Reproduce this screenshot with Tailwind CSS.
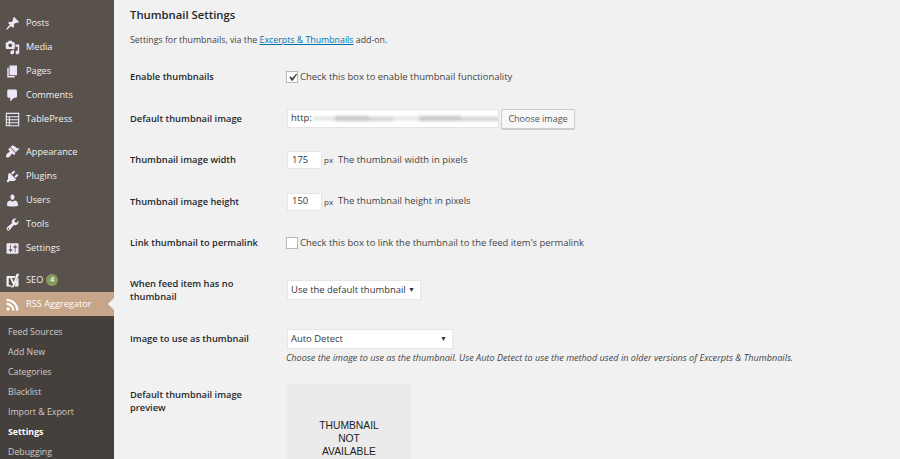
<!DOCTYPE html>
<html lang="en">
<head>
    <meta charset="UTF-8">
    <meta name="viewport" content="width=device-width, initial-scale=1.0">
    <title>Thumbnail Settings</title>
    <script src="https://cdn.jsdelivr.net/npm/@tailwindcss/browser@4"></script>
</head>
<body class="bg-[#f1f1f1] font-['Open_Sans',sans-serif] text-[9.45px] text-[#444]">
    <div class="flex h-[459px] w-[900px] overflow-hidden">
        <!-- Admin menu -->
        <aside class="w-[114px] shrink-0 bg-[#59524c] text-[#f1f1f1] text-[9.2px]">
            <ul class="pt-[11px]">
                <li class="flex h-6 items-center gap-[6px] pl-[5px]">
                    <svg class="size-[15px] fill-[#ece6f6]" viewBox="0 0 20 20"><path d="M10.44 3.02l1.82-1.82 6.36 6.35-1.83 1.82c-1.05-.68-2.48-.57-3.41.36l-.75.75c-.92.93-1.04 2.35-.35 3.41l-1.83 1.82-2.41-2.41-2.8 2.79c-.42.42-3.38 2.71-3.8 2.29s1.86-3.39 2.28-3.81l2.79-2.79L4.1 9.36l1.83-1.82c1.05.69 2.48.57 3.4-.36l.75-.75c.93-.92 1.05-2.35.36-3.41z"/></svg>
                    <span>Posts</span>
                </li>
                <li class="flex h-6 items-center gap-[6px] pl-[5px]">
                    <svg class="size-[15px] fill-[#ece6f6]" viewBox="0 0 20 20"><path d="M13 11V4c0-.55-.45-1-1-1h-1.67L9 1H5L3.67 3H2c-.55 0-1 .45-1 1v7c0 .55.45 1 1 1h10c.55 0 1-.45 1-1zM7 4.5c1.38 0 2.5 1.12 2.5 2.5S8.38 9.5 7 9.5 4.5 8.38 4.5 7 5.62 4.5 7 4.5zM14 6h5v10.5c0 1.38-1.12 2.5-2.5 2.5S14 17.88 14 16.5s1.12-2.5 2.5-2.5c.17 0 .34.02.5.05V9h-3V6zm-4 8.05V13h2v3.5c0 1.38-1.12 2.5-2.5 2.5S7 17.88 7 16.5 8.12 14 9.5 14c.17 0 .34.02.5.05z"/></svg>
                    <span>Media</span>
                </li>
                <li class="flex h-6 items-center gap-[6px] pl-[5px]">
                    <svg class="size-[15px] fill-[#ece6f6]" viewBox="0 0 20 20"><path d="M6 15V2h10v13H6zm-1 1h8v2H3V5h2v11z"/></svg>
                    <span>Pages</span>
                </li>
                <li class="flex h-6 items-center gap-[6px] pl-[5px]">
                    <svg class="size-[15px] fill-[#ece6f6]" viewBox="0 0 20 20"><path d="M5 2h9c1.1 0 2 .9 2 2v7c0 1.1-.9 2-2 2h-2l-5 5v-5H5c-1.1 0-2-.9-2-2V4c0-1.1.9-2 2-2z"/></svg>
                    <span>Comments</span>
                </li>
                <li class="flex h-6 items-center gap-[6px] pl-[5px]">
                    <svg class="size-[15px] fill-[#ece6f6]" viewBox="0 0 20 20"><path fill-rule="evenodd" d="M1 1h18v18H1zM2.5 2.5v3h15v-3zM2.5 7v2.5h2.5V7zM6.5 7v2.5h11V7zM2.5 11v2.5h2.5V11zM6.5 11v2.5h11V11zM2.5 15v2.5h2.5V15zM6.5 15v2.5h11V15z"/></svg>
                    <span>TablePress</span>
                </li>
                <li class="mt-2 flex h-[25px] items-center gap-[6px] pl-[5px]">
                    <svg class="size-[15px] fill-[#ece6f6]" viewBox="0 0 20 20"><path d="M14.48 11.06L7.41 3.99l1.5-1.5c.5-.56 2.3-.47 3.51.32 1.21.8 1.43 1.28 2.91 2.1 1.18.64 2.45 1.26 4.45.85zm-.71.71L6.7 4.7 4.93 6.47c-.39.39-.39 1.02 0 1.41l1.06 1.06c.39.39.39 1.03 0 1.42-.6.6-1.43 1.11-2.21 1.69-.35.26-.7.53-1.01.84-1.34 1.34-1.77 3.3-1.07 4.71 1.41.7 3.37.27 4.71-1.07.31-.31.58-.66.84-1.01.58-.78 1.09-1.61 1.69-2.21.39-.39 1.03-.39 1.42 0l1.06 1.06c.39.39 1.02.39 1.41 0z"/></svg>
                    <span>Appearance</span>
                </li>
                <li class="flex h-6 items-center gap-[6px] pl-[5px]">
                    <svg class="size-[15px] fill-[#ece6f6]" viewBox="0 0 20 20"><path d="M13.11 4.36L9.87 7.6 8 5.73l3.24-3.24c.35-.34 1.05-.2 1.56.32.52.51.66 1.21.31 1.55zm-8 1.77l.91-1.12 9.01 9.01-1.19.84c-.71.71-2.63 1.16-3.82 1.16H6.14L4.9 17.26c-.59.59-1.54.59-2.12 0-.59-.58-.59-1.53 0-2.12l1.24-1.24v-3.88c0-1.13.4-3.19 1.09-3.89zm7.26 3.97l3.24-3.24c.34-.35 1.04-.21 1.55.31.52.51.66 1.21.31 1.55l-3.24 3.25z"/></svg>
                    <span>Plugins</span>
                </li>
                <li class="flex h-6 items-center gap-[6px] pl-[5px]">
                    <svg class="size-[15px] fill-[#ece6f6]" viewBox="0 0 20 20"><path d="M10 9.25c-2.27 0-2.73-3.44-2.73-3.44C7 4.02 7.82 2 9.97 2c2.16 0 2.98 2.02 2.71 3.81 0 0-.41 3.44-2.68 3.44zm0 2.57L12.72 10c2.39 0 4.52 2.33 4.52 4.53v2.49s-3.65 1.13-7.24 1.13c-3.65 0-7.24-1.13-7.24-1.13v-2.49c0-2.25 1.94-4.48 4.47-4.48z"/></svg>
                    <span>Users</span>
                </li>
                <li class="flex h-6 items-center gap-[6px] pl-[5px]">
                    <svg class="size-[15px] fill-[#ece6f6]" viewBox="0 0 20 20"><path d="M16.68 9.77c-1.34 1.34-3.3 1.67-4.95.99l-5.41 6.52c-.99.99-2.59.99-3.58 0s-.99-2.59 0-3.57l6.52-5.42c-.68-1.65-.35-3.61.99-4.95 1.28-1.28 3.12-1.62 4.72-1.06l-2.89 2.89 2.82 2.82 2.86-2.87c.53 1.58.18 3.39-1.08 4.65zM3.81 16.21c.4.39 1.04.39 1.43 0 .4-.4.4-1.04 0-1.43-.39-.4-1.03-.4-1.43 0-.39.39-.39 1.03 0 1.43z"/></svg>
                    <span>Tools</span>
                </li>
                <li class="flex h-6 items-center gap-[6px] pl-[5px]">
                    <svg class="size-[15px] fill-[#ece6f6]" viewBox="0 0 20 20"><path d="M18 16V4c0-.55-.45-1-1-1H3c-.55 0-1 .45-1 1v12c0 .55.45 1 1 1h14c.55 0 1-.45 1-1zM8 11h1c.55 0 1 .45 1 1s-.45 1-1 1H8v1.5c0 .28-.22.5-.5.5s-.5-.22-.5-.5V13H6c-.55 0-1-.45-1-1s.45-1 1-1h1V5.5c0-.28.22-.5.5-.5s.5.22.5.5V11zm5-2h-1c-.55 0-1-.45-1-1s.45-1 1-1h1V5.5c0-.28.22-.5.5-.5s.5.22.5.5V7h1c.55 0 1 .45 1 1s-.45 1-1 1h-1v5.5c0 .28-.22.5-.5.5s-.5-.22-.5-.5V9z"/></svg>
                    <span>Settings</span>
                </li>
                <li class="mt-2 flex h-6 items-center gap-[6px] pl-[5px]">
                    <svg class="size-[15px] fill-[#f1f1f1]" viewBox="0 0 20 20"><path fill-rule="evenodd" d="M3.5 4H14L13 6.5H5V16h3.5l-.7 2H3.5C2.7 18 2 17.300 2 16.500V5.500C2 4.700 2.700 4 3.500 4zM15.500 1H19L12.800 16.500C12 18.500 10.800 19.500 8.500 19.500V17.300C9.700 17.200 10.300 16.800 10.700 15.700L6.500 7H9.500L11.700 12zM16 7H18V16.500C18 17.300 17.300 18 16.500 18H13z"/></svg>
                    <span>SEO</span>
                    <span class="-ml-[3px] flex size-3 items-center justify-center rounded-full bg-[#8a9a5b] text-[7px] font-semibold text-white">4</span>
                </li>
                <li class="relative flex h-6 items-center gap-[6px] bg-[#c7a589] pl-[5px] text-white">
                    <svg class="size-[15px] fill-white" viewBox="0 0 20 20"><path d="M14.92 18H18C18 9.32 10.82 2.25 2 2.25v3.02c7.12 0 12.92 5.71 12.92 12.73zm-5.44 0h3.08C12.56 12.27 7.82 7.6 2 7.6v3.02c2 0 3.87.77 5.29 2.16C8.7 14.17 9.48 16.03 9.48 18zm-5.35-.02c1.17 0 2.13-.93 2.13-2.09 0-1.15-.96-2.09-2.13-2.09-1.18 0-2.13.94-2.13 2.09 0 1.16.95 2.09 2.13 2.09z"/></svg>
                    <span>RSS Aggregator</span>
                    <span class="absolute right-0 top-1/2 -translate-y-1/2 border-y-[6px] border-r-[6px] border-y-transparent border-r-[#f1f1f1]"></span>
                </li>
            </ul>
            <ul class="h-full bg-[#46403c] pl-[8px] pt-[7px] text-[8.8px] text-[#cdcbc9]">
                <li class="flex h-5 items-center">Feed Sources</li>
                <li class="flex h-5 items-center">Add New</li>
                <li class="flex h-5 items-center">Categories</li>
                <li class="flex h-5 items-center">Blacklist</li>
                <li class="flex h-5 items-center">Import &amp; Export</li>
                <li class="flex h-5 items-center font-bold text-white">Settings</li>
                <li class="flex h-5 items-center">Debugging</li>
            </ul>
        </aside>

        <!-- Settings form -->
        <main class="min-w-0 flex-1 pl-4">
            <h1 class="flex h-[30px] items-center text-[11.3px] font-semibold text-[#23282d]">Thumbnail Settings</h1>
            <p class="flex h-[22px] items-center text-[8.8px]">Settings for thumbnails, via the&nbsp;<a class="text-[#0073aa] underline" href="#">Excerpts &amp; Thumbnails</a>&nbsp;add-on.</p>

            <div class="mt-[5px] grid h-10 grid-cols-[157px_1fr] items-center text-[9.45px]">
                <div class="text-[9.3px] font-semibold text-[#23282d]">Enable thumbnails</div>
                <div class="-ml-[1px] mt-[1px] flex items-center gap-[2px]">
                    <span class="flex size-3 items-center justify-center border border-[#b4b9be] bg-white">
                        <svg class="size-[15px] shrink-0" viewBox="0 0 20 20"><path fill="#444" d="M14.83 4.89l1.34.94-5.81 8.38H9.02L5.78 9.67l1.34-1.25 2.57 2.4z"/></svg>
                    </span>
                    <span>Check this box to enable thumbnail functionality</span>
                </div>
            </div>

            <div class="grid h-[42px] grid-cols-[157px_1fr] items-center pt-[1px]">
                <div class="text-[9.3px] font-semibold text-[#23282d]">Default thumbnail image</div>
                <div class="flex items-center gap-[2px]">
                    <div class="flex h-[19px] w-[212px] items-center overflow-hidden border border-[#e5e5e5] bg-white pl-[3px] text-[#32373c]">
                        <span>http:</span>
                        <span class="ml-[1px] flex h-[6px] items-center blur-[1.5px]">
                            <span class="h-[3px] w-[22px] bg-[#ddd]"></span>
                            <span class="h-[5px] w-[34px] bg-[#c6c6c6]"></span>
                            <span class="h-[4px] w-[24px] bg-[#d0d0d0]"></span>
                            <span class="h-[3px] w-[26px] bg-[#e0e0e0]"></span>
                            <span class="h-[5px] w-[42px] bg-[#c8c8c8]"></span>
                            <span class="h-[4px] w-[42px] bg-[#d2d2d2]"></span>
                        </span>
                    </div>
                    <button class="flex h-[20px] w-[74px] items-center justify-center rounded-[2px] border border-[#ccc] bg-[#f7f7f7] text-[9px] text-[#555] shadow-[0_1px_0_#ccc]">Choose image</button>
                </div>
            </div>

            <div class="grid h-[42px] grid-cols-[157px_1fr] items-center">
                <div class="text-[9.3px] font-semibold text-[#23282d]">Thumbnail image width</div>
                <div class="flex items-center">
                    <div class="flex h-[18px] w-[35px] items-center border border-[#e5e5e5] bg-white pl-[4px] text-[#32373c]">175</div>
                    <span class="ml-[2px] w-[14px] text-[8px]">px</span>
                    <span>The thumbnail width in pixels</span>
                </div>
            </div>

            <div class="grid h-[41px] grid-cols-[157px_1fr] items-center">
                <div class="text-[9.3px] font-semibold text-[#23282d]">Thumbnail image height</div>
                <div class="flex items-center">
                    <div class="flex h-[18px] w-[35px] items-center border border-[#e5e5e5] bg-white pl-[4px] text-[#32373c]">150</div>
                    <span class="ml-[2px] w-[14px] text-[8px]">px</span>
                    <span>The thumbnail height in pixels</span>
                </div>
            </div>

            <div class="grid h-[42px] grid-cols-[157px_1fr] items-center">
                <div class="text-[9.3px] font-semibold text-[#23282d]">Link thumbnail to permalink</div>
                <div class="-ml-[1px] flex items-center gap-[2px]">
                    <span class="size-3 border border-[#b4b9be] bg-white"></span>
                    <span>Check this box to link the thumbnail to the feed item's permalink</span>
                </div>
            </div>

            <div class="grid h-[52px] grid-cols-[157px_1fr] items-center">
                <div class="w-[120px] text-[9.3px] font-semibold leading-[13px] text-[#23282d]">When feed item has no thumbnail</div>
                <div class="flex h-5 w-[134px] items-center justify-between border border-[#e5e5e5] bg-white pl-[3px] pr-[5px] text-[#32373c]">
                    <span>Use the default thumbnail</span>
                    <span class="text-[7px]">▼</span>
                </div>
            </div>

            <div class="grid h-[68px] grid-cols-[157px_1fr] items-start pt-[13px]">
                <div class="flex h-5 items-center text-[9.3px] font-semibold text-[#23282d]">Image to use as thumbnail</div>
                <div>
                    <div class="flex h-5 w-[166px] items-center justify-between border border-[#e5e5e5] bg-white pl-[3px] pr-[5px] text-[#32373c]">
                        <span>Auto Detect</span>
                        <span class="text-[7px]">▼</span>
                    </div>
                    <p class="mt-[2px] -ml-[1px] text-[9.1px] italic">Choose the image to use as the thumbnail. Use Auto Detect to use the method used in older versions of Excerpts &amp; Thumbnails.</p>
                </div>
            </div>

            <div class="grid grid-cols-[157px_1fr] items-start">
                <div class="mt-[4px] w-[120px] text-[9.3px] font-semibold leading-[13px] text-[#23282d]">Default thumbnail image preview</div>
                <div class="flex h-[108px] w-[124px] flex-col items-center justify-center bg-[#ebebeb] font-['Liberation_Sans',sans-serif] text-[10.3px] leading-[13px] text-[#222]">
                    <span>THUMBNAIL</span>
                    <span>NOT</span>
                    <span>AVAILABLE</span>
                </div>
            </div>
        </main>
    </div>
</body>
</html>
